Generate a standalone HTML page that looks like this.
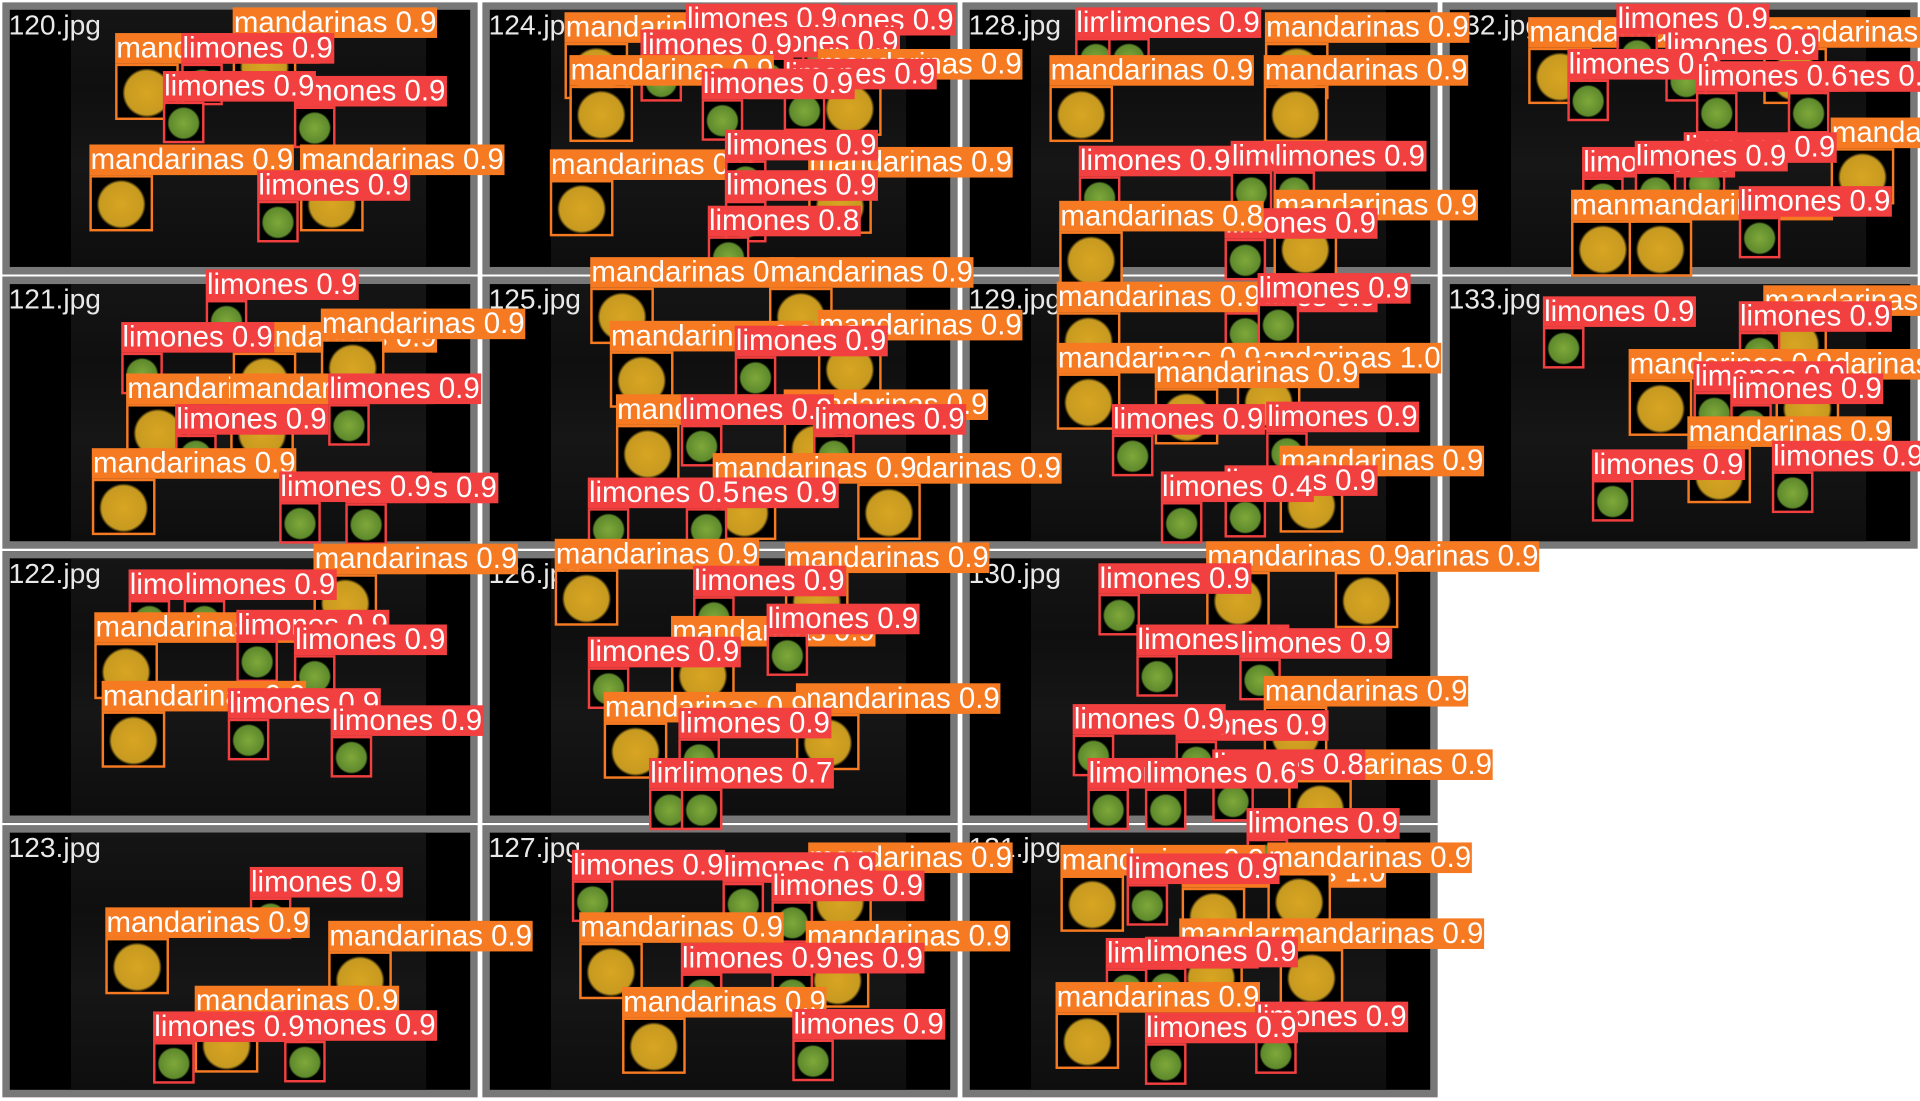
<!DOCTYPE html>
<html><head><meta charset="utf-8"><style>
html,body{margin:0;padding:0;background:#fff;width:1920px;height:1100px;overflow:hidden}
#w{position:absolute;left:0;top:0;width:1568px;height:899px;transform:scale(1.2245);transform-origin:0 0;overflow:hidden;font-family:"Liberation Sans",sans-serif}
.t{position:absolute;width:376px;height:210px;background:#000;border:6px solid #787878;box-sizing:content-box}
.t .p{position:absolute;left:50px;top:0;width:290px;height:210px;background:linear-gradient(#151515,#0f0f0f 30%,#161616 60%,#0e0e0e)}
.t .n{position:absolute;left:-1px;top:0px;color:#e8e8e8;font-size:23px;line-height:24px}
.o,.r{position:absolute;color:#fff;font-size:24px;line-height:25px;height:25px;padding:0 1px;white-space:nowrap}
.o{background:#f57a22}.r{background:#f23f3f}
.o::after,.r::after{content:"";position:absolute;left:0;top:25px;box-sizing:border-box}
.o::after{width:52px;height:46px;border:2px solid #f57a22;background:radial-gradient(circle at 50% 52%,#d9a522 0,#c79a20 55%,#000 62%)}
.r::after{width:34px;height:34px;border:2px solid #f23f3f;background:radial-gradient(circle at 50% 52%,#7fa83a 0,#5f8a2c 55%,#000 62%)}
</style></head><body><div id="w">
<div class="t" style="left:2px;top:2px"><div class="p"></div><div class="n">120.jpg</div></div>
<div class="t" style="left:394px;top:2px"><div class="p"></div><div class="n">124.jpg</div></div>
<div class="t" style="left:786px;top:2px"><div class="p"></div><div class="n">128.jpg</div></div>
<div class="t" style="left:1178px;top:2px"><div class="p"></div><div class="n">132.jpg</div></div>
<div class="t" style="left:2px;top:226px"><div class="p"></div><div class="n">121.jpg</div></div>
<div class="t" style="left:394px;top:226px"><div class="p"></div><div class="n">125.jpg</div></div>
<div class="t" style="left:786px;top:226px"><div class="p"></div><div class="n">129.jpg</div></div>
<div class="t" style="left:1178px;top:226px"><div class="p"></div><div class="n">133.jpg</div></div>
<div class="t" style="left:2px;top:450px"><div class="p"></div><div class="n">122.jpg</div></div>
<div class="t" style="left:394px;top:450px"><div class="p"></div><div class="n">126.jpg</div></div>
<div class="t" style="left:786px;top:450px"><div class="p"></div><div class="n">130.jpg</div></div>
<div class="t" style="left:2px;top:674px"><div class="p"></div><div class="n">123.jpg</div></div>
<div class="t" style="left:394px;top:674px"><div class="p"></div><div class="n">127.jpg</div></div>
<div class="t" style="left:786px;top:674px"><div class="p"></div><div class="n">131.jpg</div></div>

<!-- 120 -->
<div class="o" style="left:190px;top:6px">mandarinas 0.9</div>
<div class="o" style="left:94px;top:27px">mandarinas 0.9</div>
<div class="r" style="left:148px;top:27px">limones 0.9</div>
<div class="r" style="left:240px;top:62px">limones 0.9</div>
<div class="r" style="left:133px;top:58px">limones 0.9</div>
<div class="o" style="left:73px;top:118px">mandarinas 0.9</div>
<div class="o" style="left:245px;top:118px">mandarinas 0.9</div>
<div class="r" style="left:210px;top:139px">limones 0.9</div>
<!-- 124 -->
<div class="o" style="left:461px;top:10px">mandarinas 0.9</div>
<div class="r" style="left:655px;top:4px">limones 0.9</div>
<div class="r" style="left:560px;top:3px">limones 0.9</div>
<div class="r" style="left:610px;top:22px">limones 0.9</div>
<div class="r" style="left:523px;top:24px">limones 0.9</div>
<div class="o" style="left:668px;top:40px">mandarinas 0.9</div>
<div class="o" style="left:465px;top:45px">mandarinas 0.9</div>
<div class="r" style="left:640px;top:48px">limones 0.9</div>
<div class="r" style="left:573px;top:56px">limones 0.9</div>
<div class="o" style="left:449px;top:122px">mandarinas 0.9</div>
<div class="o" style="left:660px;top:120px">mandarinas 0.9</div>
<div class="r" style="left:592px;top:106px">limones 0.9</div>
<div class="r" style="left:592px;top:139px">limones 0.9</div>
<div class="r" style="left:578px;top:168px">limones 0.8</div>
<!-- 128 -->
<div class="r" style="left:878px;top:6px">limones 0.9</div>
<div class="r" style="left:905px;top:6px">limones 0.9</div>
<div class="o" style="left:1033px;top:10px">mandarinas 0.9</div>
<div class="o" style="left:857px;top:45px">mandarinas 0.9</div>
<div class="o" style="left:1032px;top:45px">mandarinas 0.9</div>
<div class="r" style="left:1005px;top:115px">limones 0.9</div>
<div class="r" style="left:881px;top:119px">limones 0.9</div>
<div class="r" style="left:1040px;top:115px">limones 0.9</div>
<div class="o" style="left:1040px;top:155px">mandarinas 0.9</div>
<div class="r" style="left:1000px;top:170px">limones 0.9</div>
<div class="o" style="left:865px;top:164px">mandarinas 0.8</div>
<!-- 132 -->
<div class="o" style="left:1440px;top:14px">mandarinas 0.9</div>
<div class="o" style="left:1248px;top:14px">mandarinas 0.9</div>
<div class="r" style="left:1320px;top:3px">limones 0.9</div>
<div class="r" style="left:1360px;top:24px">limones 0.9</div>
<div class="r" style="left:1460px;top:50px">limones 0.9</div>
<div class="r" style="left:1280px;top:40px">limones 0.9</div>
<div class="r" style="left:1385px;top:50px">limones 0.6</div>
<div class="o" style="left:1495px;top:96px">mandarinas 0.9</div>
<div class="r" style="left:1375px;top:108px">limones 0.9</div>
<div class="r" style="left:1292px;top:120px">limones 0.9</div>
<div class="r" style="left:1335px;top:115px">limones 0.9</div>
<div class="o" style="left:1283px;top:155px">mandarinas 0.9</div>
<div class="o" style="left:1330px;top:155px">mandarinas 0.9</div>
<div class="r" style="left:1420px;top:152px">limones 0.9</div>
<!-- 121 -->
<div class="r" style="left:168px;top:220px">limones 0.9</div>
<div class="o" style="left:190px;top:263px">mandarinas 0.9</div>
<div class="o" style="left:262px;top:252px">mandarinas 0.9</div>
<div class="r" style="left:99px;top:263px">limones 0.9</div>
<div class="o" style="left:103px;top:305px">mandarinas 0.9</div>
<div class="o" style="left:188px;top:305px">mandarinas 0.9</div>
<div class="r" style="left:268px;top:305px">limones 0.9</div>
<div class="r" style="left:143px;top:330px">limones 0.9</div>
<div class="o" style="left:75px;top:366px">mandarinas 0.9</div>
<div class="r" style="left:282px;top:386px">limones 0.9</div>
<div class="r" style="left:228px;top:385px">limones 0.9</div>
<!-- 125 -->
<div class="o" style="left:482px;top:210px">mandarinas 0.9</div>
<div class="o" style="left:628px;top:210px">mandarinas 0.9</div>
<div class="o" style="left:668px;top:253px">mandarinas 0.9</div>
<div class="o" style="left:498px;top:262px">mandarinas 0.9</div>
<div class="r" style="left:600px;top:266px">limones 0.9</div>
<div class="o" style="left:640px;top:318px">mandarinas 0.9</div>
<div class="o" style="left:503px;top:322px">mandarinas 0.9</div>
<div class="r" style="left:556px;top:322px">limones 0.9</div>
<div class="r" style="left:664px;top:330px">limones 0.9</div>
<div class="o" style="left:700px;top:370px">mandarinas 0.9</div>
<div class="o" style="left:582px;top:370px">mandarinas 0.9</div>
<div class="r" style="left:560px;top:390px">limones 0.9</div>
<div class="r" style="left:480px;top:390px">limones 0.5</div>
<!-- 129 -->
<div class="r" style="left:1000px;top:230px">limones 0.9</div>
<div class="o" style="left:863px;top:230px">mandarinas 0.9</div>
<div class="r" style="left:1027px;top:223px">limones 0.9</div>
<div class="o" style="left:1010px;top:280px">mandarinas 1.0</div>
<div class="o" style="left:863px;top:280px">mandarinas 0.9</div>
<div class="o" style="left:943px;top:292px">mandarinas 0.9</div>
<div class="r" style="left:908px;top:330px">limones 0.9</div>
<div class="r" style="left:1034px;top:328px">limones 0.9</div>
<div class="o" style="left:1045px;top:364px">mandarinas 0.9</div>
<div class="r" style="left:1000px;top:380px">limones 0.9</div>
<div class="r" style="left:948px;top:385px">limones 0.4</div>
<!-- 133 -->
<div class="o" style="left:1440px;top:233px">mandarinas 0.9</div>
<div class="r" style="left:1260px;top:242px">limones 0.9</div>
<div class="r" style="left:1420px;top:246px">limones 0.9</div>
<div class="o" style="left:1450px;top:285px">mandarinas 0.9</div>
<div class="o" style="left:1330px;top:285px">mandarinas 0.9</div>
<div class="r" style="left:1383px;top:295px">limones 0.9</div>
<div class="r" style="left:1413px;top:305px">limones 0.9</div>
<div class="o" style="left:1378px;top:340px">mandarinas 0.9</div>
<div class="r" style="left:1300px;top:367px">limones 0.9</div>
<div class="r" style="left:1447px;top:360px">limones 0.9</div>
<!-- 122 -->
<div class="o" style="left:256px;top:444px">mandarinas 0.9</div>
<div class="r" style="left:105px;top:465px">limones 0.9</div>
<div class="r" style="left:150px;top:465px">limones 0.9</div>
<div class="o" style="left:77px;top:500px">mandarinas 0.9</div>
<div class="r" style="left:193px;top:498px">limones 0.9</div>
<div class="r" style="left:240px;top:510px">limones 0.9</div>
<div class="o" style="left:83px;top:556px">mandarinas 0.9</div>
<div class="r" style="left:186px;top:562px">limones 0.9</div>
<div class="r" style="left:270px;top:576px">limones 0.9</div>
<!-- 126 -->
<div class="o" style="left:453px;top:440px">mandarinas 0.9</div>
<div class="o" style="left:641px;top:443px">mandarinas 0.9</div>
<div class="r" style="left:566px;top:462px">limones 0.9</div>
<div class="o" style="left:548px;top:503px">mandarinas 0.9</div>
<div class="r" style="left:626px;top:493px">limones 0.9</div>
<div class="r" style="left:480px;top:520px">limones 0.9</div>
<div class="o" style="left:650px;top:558px">mandarinas 0.9</div>
<div class="o" style="left:493px;top:565px">mandarinas 0.9</div>
<div class="r" style="left:554px;top:578px">limones 0.9</div>
<div class="r" style="left:530px;top:619px">limones 0.7</div>
<div class="r" style="left:556px;top:619px">limones 0.7</div>
<!-- 130 -->
<div class="o" style="left:1090px;top:442px">mandarinas 0.9</div>
<div class="o" style="left:985px;top:442px">mandarinas 0.9</div>
<div class="r" style="left:897px;top:460px">limones 0.9</div>
<div class="r" style="left:928px;top:510px">limones 0.9</div>
<div class="r" style="left:1012px;top:513px">limones 0.9</div>
<div class="o" style="left:1032px;top:552px">mandarinas 0.9</div>
<div class="r" style="left:960px;top:580px">limones 0.9</div>
<div class="r" style="left:876px;top:575px">limones 0.9</div>
<div class="o" style="left:1052px;top:612px">mandarinas 0.9</div>
<div class="r" style="left:990px;top:612px">limones 0.8</div>
<div class="r" style="left:888px;top:619px">limones 0.6</div>
<div class="r" style="left:935px;top:619px">limones 0.6</div>
<div class="r" style="left:1018px;top:660px">limones 0.9</div>
<!-- 123 -->
<div class="r" style="left:204px;top:708px">limones 0.9</div>
<div class="o" style="left:86px;top:741px">mandarinas 0.9</div>
<div class="o" style="left:268px;top:752px">mandarinas 0.9</div>
<div class="o" style="left:159px;top:805px">mandarinas 0.9</div>
<div class="r" style="left:232px;top:825px">limones 0.9</div>
<div class="r" style="left:125px;top:826px">limones 0.9</div>
<!-- 127 -->
<div class="o" style="left:660px;top:688px">mandarinas 0.9</div>
<div class="r" style="left:467px;top:694px">limones 0.9</div>
<div class="r" style="left:590px;top:696px">limones 0.9</div>
<div class="r" style="left:630px;top:711px">limones 0.9</div>
<div class="o" style="left:658px;top:752px">mandarinas 0.9</div>
<div class="o" style="left:473px;top:745px">mandarinas 0.9</div>
<div class="r" style="left:630px;top:770px">limones 0.9</div>
<div class="r" style="left:556px;top:770px">limones 0.9</div>
<div class="o" style="left:508px;top:806px">mandarinas 0.9</div>
<div class="r" style="left:647px;top:824px">limones 0.9</div>
<!-- 131 -->
<div class="r" style="left:1018px;top:660px">limones 0.9</div>
<div class="o" style="left:866px;top:690px">mandarinas 0.9</div>
<div class="o" style="left:965px;top:700px">mandarinas 1.0</div>
<div class="o" style="left:1035px;top:688px">mandarinas 0.9</div>
<div class="r" style="left:920px;top:697px">limones 0.9</div>
<div class="o" style="left:963px;top:750px">mandarinas 0.9</div>
<div class="o" style="left:1045px;top:750px">mandarinas 0.9</div>
<div class="r" style="left:903px;top:766px">limones 0.9</div>
<div class="r" style="left:935px;top:765px">limones 0.9</div>
<div class="o" style="left:862px;top:802px">mandarinas 0.9</div>
<div class="r" style="left:1025px;top:818px">limones 0.9</div>
<div class="r" style="left:935px;top:827px">limones 0.9</div>
</div></body></html>
